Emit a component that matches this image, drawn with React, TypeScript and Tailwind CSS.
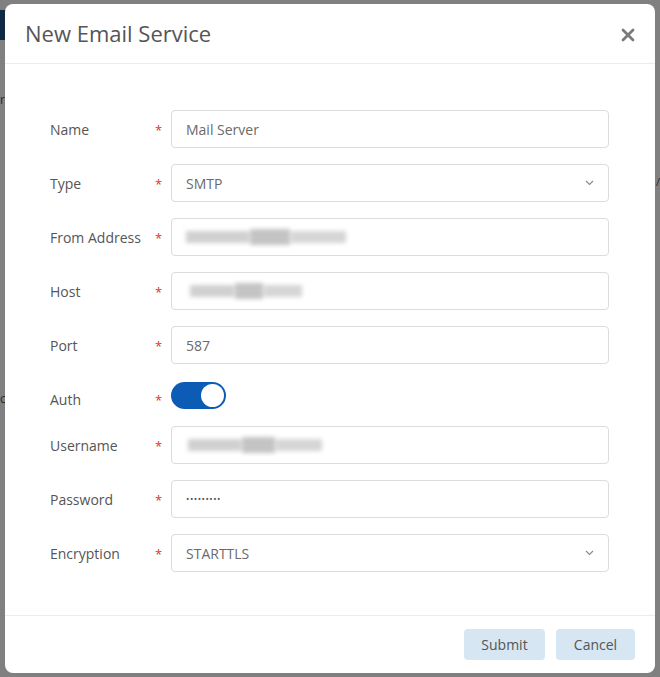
import React from 'react';

const Req = () => <span className="w-[16px] text-[13px] text-[#d9342b] leading-none pt-[3px]">*</span>;

const Blur = ({ w, x = 0 }: { w: number; x?: number }) => (
  <div className="flex items-center gap-[1px] blur-[2px]" style={{ marginLeft: x }}>
    <div className="h-[12px] bg-[#d0d0d0]" style={{ width: w * 0.4 }} />
    <div className="h-[16px] bg-[#c4c4c4]" style={{ width: w * 0.25 }} />
    <div className="h-[12px] bg-[#d6d6d6]" style={{ width: w * 0.35 }} />
  </div>
);

const Chevron = () => (
  <svg width="9" height="6" viewBox="0 0 9 6" className="mr-[14px]">
    <path d="M1 1l3.5 3.5L8 1" fill="none" stroke="#8a8a8a" strokeWidth="1.2" />
  </svg>
);

const Field = ({ label, children }: { label: string; children: React.ReactNode }) => (
  <div className="flex items-center">
    <span className="w-[105px] text-[14px] text-[#555]">{label}</span>
    <Req />
    {children}
  </div>
);

const Box = ({ children }: { children?: React.ReactNode }) => (
  <div className="flex h-[38px] w-[438px] items-center justify-between rounded-[4px] border border-[#dcdcdc] bg-white pl-[14px] text-[14px] text-[#6a6a6a]">
    {children}
  </div>
);

export default function App() {
  return (
    <div
      className="relative h-[677px] w-[660px] overflow-hidden bg-[#808080] pt-[4px] pl-[5px]"
      style={{ fontFamily: '"Open Sans", "Noto Sans", sans-serif' }}
    >
      {/* bits of the page under the overlay */}
      <div className="absolute left-0 top-[10px] h-[30px] w-[6px] bg-[#102a45]" />
      <span className="absolute left-0 top-[94px] text-[12px] leading-none text-[#2a2a2a]">r</span>
      <span className="absolute left-0 top-[393px] text-[12px] leading-none text-[#2a2a2a]">c</span>
      <span className="absolute right-0 top-[176px] text-[11px] leading-none text-[#2a2a2a]">/</span>

      <div className="relative flex h-[669px] w-[650px] flex-col rounded-[8px] bg-white">
        {/* Header */}
        <div className="flex h-[60px] items-center justify-between border-b border-[#ececec] pl-[20px] pr-[20px]">
          <h2 className="text-[22px] text-[#555]">New Email Service</h2>
          <svg width="14" height="14" viewBox="0 0 14 14" className="mt-[2px]">
            <path d="M2 2l10 10M12 2L2 12" stroke="#7a7a7a" strokeWidth="2.8" strokeLinecap="round" />
          </svg>
        </div>

        {/* Body */}
        <div className="flex flex-1 flex-col gap-[16px] pl-[45px] pt-[46px]">
          <Field label="Name">
            <Box>Mail Server</Box>
          </Field>
          <Field label="Type">
            <Box>
              SMTP
              <Chevron />
            </Box>
          </Field>
          <Field label="From Address">
            <Box>
              <Blur w={158} x={0} />
            </Box>
          </Field>
          <Field label="Host">
            <Box>
              <Blur w={110} x={4} />
            </Box>
          </Field>
          <Field label="Port">
            <Box>587</Box>
          </Field>
          <div className="flex h-[30px] items-center">
            <span className="w-[105px] pt-[8px] text-[14px] text-[#555]">Auth</span>
            <span className="w-[16px] pt-[11px] text-[13px] text-[#d9342b] leading-none">*</span>
            <div className="flex h-[27px] w-[55px] items-center justify-end rounded-full bg-[#0c5cb6] pr-[2px]">
              <div className="h-[23px] w-[23px] rounded-full bg-white" />
            </div>
          </div>
          <Field label="Username">
            <Box>
              <Blur w={132} x={2} />
            </Box>
          </Field>
          <Field label="Password">
            <Box>
              <span className="text-[9px] tracking-[0.5px] text-[#555]">•••••••••</span>
            </Box>
          </Field>
          <Field label="Encryption">
            <Box>
              STARTTLS
              <Chevron />
            </Box>
          </Field>
        </div>

        {/* Footer */}
        <div className="flex h-[58px] items-center justify-end gap-[11px] border-t border-[#ececec] pr-[20px]">
          <button className="h-[31px] w-[81px] rounded-[4px] bg-[#d6e6f3] text-[14px] text-[#555]">Submit</button>
          <button className="h-[31px] w-[79px] rounded-[4px] bg-[#d6e6f3] text-[14px] text-[#555]">Cancel</button>
        </div>
      </div>
    </div>
  );
}
